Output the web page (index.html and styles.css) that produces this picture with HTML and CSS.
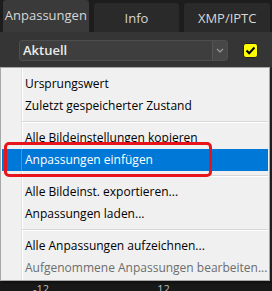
FILE: index.html
```html
<!DOCTYPE html>
<html lang="de">
<head>
  <meta charset="UTF-8">
  <title>Anpassungen</title>
  <link rel="stylesheet" href="styles.css">
</head>
<body>
  <div class="window">
    <div class="tabs">
      <div class="tab active">Anpassungen</div>
      <div class="tab">Info</div>
      <div class="tab">XMP/IPTC</div>
    </div>

    <div class="panel">
      <div class="toolbar">
        <div class="select">
          <span class="select-value">Aktuell</span>
          <span class="select-arrow">
            <svg width="8" height="5" viewBox="0 0 8 5"><path d="M1 1 L4 4 L7 1" fill="none" stroke="#9a9a9a" stroke-width="1.2"/></svg>
          </span>
        </div>
        <div class="check">
          <svg width="11" height="9" viewBox="0 0 11 9"><path d="M1.5 4.5 L4.2 7.2 L9.5 1.5" fill="none" stroke="#000" stroke-width="2"/></svg>
        </div>
      </div>

      <div class="content">
        <div class="scale">
          <span>-12</span>
          <span>12</span>
        </div>
      </div>

      <ul class="menu">
        <li>Ursprungswert</li>
        <li>Zuletzt gespeicherter Zustand</li>
        <li class="sep"></li>
        <li>Alle Bildeinstellungen kopieren</li>
        <li class="selected">Anpassungen einfügen</li>
        <li class="sep"></li>
        <li>Alle Bildeinst. exportieren...</li>
        <li>Anpassungen laden...</li>
        <li class="sep"></li>
        <li>Alle Anpassungen aufzeichnen...</li>
        <li class="disabled">Aufgenommene Anpassungen bearbeiten...</li>
      </ul>

      <div class="callout"></div>
    </div>
  </div>
</body>
</html>
```

FILE: styles.css
```css
:root {
  --bar-bg: #1d1d1d;
  --tab-bg: #2a2a2a;
  --tab-active: #3a3a3a;
  --panel-bg: #353535;
  --menu-bg: #f0f0f0;
  --menu-border: #a8a8a8;
  --highlight: #0078d7;
  --callout: #e8141c;
}

* {
  box-sizing: border-box;
}

body {
  margin: 0;
  background: var(--bar-bg);
  font-family: 'Open Sans', 'Noto Sans', sans-serif;
  width: 272px;
  height: 291px;
  overflow: hidden;
}

.window {
  display: flex;
  flex-direction: column;
  height: 291px;
}

.tabs {
  display: flex;
  gap: 5px;
  padding: 0 2px 0 3px;
  height: 32px;
  align-items: flex-end;
}

.tab {
  flex: 1;
  height: 29px;
  background: var(--tab-bg);
  color: #d6d6d6;
  font-size: 13px;
  display: flex;
  align-items: center;
  justify-content: center;
  border-radius: 3px 3px 0 0;
}

.tab.active {
  height: 32px;
  background: var(--tab-active);
  padding-bottom: 3px;
}

.panel {
  flex: 1;
  position: relative;
  background: var(--panel-bg);
  display: flex;
  flex-direction: column;
}

.toolbar {
  display: flex;
  align-items: center;
  gap: 15px;
  height: 35px;
  padding: 2px 0 0 19px;
}

.select {
  width: 209px;
  height: 21px;
  display: flex;
  background: #3e3e3e;
  border: 1px solid #4e4e4e;
  border-radius: 3px;
}

.select-value {
  flex: 1;
  color: #ececec;
  font-size: 13px;
  font-weight: 600;
  line-height: 19px;
  padding-left: 3px;
}

.select-arrow {
  width: 15px;
  display: flex;
  align-items: center;
  justify-content: center;
  background: #474747;
  border-left: 1px solid #555;
  border-radius: 0 2px 2px 0;
}

.check {
  width: 15px;
  height: 15px;
  background: #ffff00;
  border: 1px solid #222;
  border-radius: 3px;
  display: flex;
  align-items: center;
  justify-content: center;
}

.content {
  flex: 1;
  background: #2c2c2c;
  display: flex;
  flex-direction: column;
  justify-content: flex-end;
}

.scale {
  height: 10px;
  background: #181818;
  display: flex;
  gap: 108px;
  padding-left: 33px;
  color: #bdbdbd;
  font-size: 11px;
  line-height: 16px;
  overflow: hidden;
}

.menu {
  position: absolute;
  top: 35px;
  left: 0;
  width: 270px;
  height: 214px;
  margin: 0;
  padding: 5px 1px 3px;
  list-style: none;
  background: var(--menu-bg);
  border: 1px solid var(--menu-border);
  box-shadow: 2px 2px 2px rgba(0, 0, 0, 0.35);
  background-image: linear-gradient(to right, transparent 20px, #e2e2e2 20px, #e2e2e2 21px, #ffffff 21px, #ffffff 22px, transparent 22px);
  font-size: 12px;
  color: #000;
}

.menu li {
  height: 22px;
  line-height: 22px;
  padding-left: 23px;
  white-space: nowrap;
}

.menu li.sep {
  height: 10px;
  margin-left: 20px;
  background: linear-gradient(to bottom, transparent 4px, #d7d7d7 4px, #d7d7d7 5px, #ffffff 5px, #ffffff 6px, transparent 6px);
}

.menu li.selected {
  background: var(--highlight);
  background-image: linear-gradient(to right, transparent 19px, #3f96e0 19px, #3f96e0 20px, transparent 20px);
  color: #fff;
}

.menu li.disabled {
  color: #6d6d6d;
}

.callout {
  position: absolute;
  top: 110px;
  left: 4px;
  width: 208px;
  height: 35px;
  border: 3px solid var(--callout);
  border-radius: 5px;
}
```
